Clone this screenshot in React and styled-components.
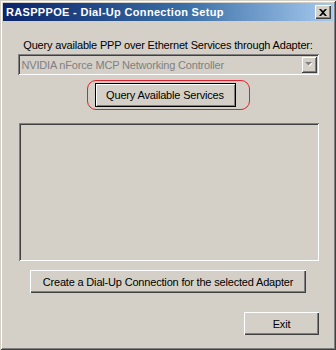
import React from 'react';
import styled, { createGlobalStyle } from 'styled-components';

const GlobalStyle = createGlobalStyle`
  html, body {
    margin: 0;
    padding: 0;
    background: #d4d0c8;
  }
  body {
    font-family: Tahoma, "Liberation Sans", Arial, sans-serif;
    font-size: 11px;
    letter-spacing: -0.18px;
  }
`;

const Window = styled.div`
  box-sizing: border-box;
  width: 336px;
  height: 350px;
  padding: 3px;
  background: #d4d0c8;
  box-shadow: inset 1px 1px 0 #d4d0c8, inset -1px -1px 0 #404040,
    inset 2px 2px 0 #ffffff, inset -2px -2px 0 #808080;
  display: flex;
  flex-direction: column;
`;

const TitleBar = styled.div`
  height: 18px;
  display: flex;
  align-items: center;
  justify-content: space-between;
  padding: 0 2px 0 3px;
  background: linear-gradient(to right, #0a246a 0%, #3a6ea5 55%, #a6caf0 100%);
`;

const Title = styled.span`
  color: #ffffff;
  font-weight: bold;
  font-size: 11px;
  letter-spacing: 0.32px;
`;

const CloseButton = styled.div`
  box-sizing: border-box;
  width: 16px;
  height: 14px;
  background: #d4d0c8;
  box-shadow: inset 1px 1px 0 #ffffff, inset -1px -1px 0 #404040,
    inset -2px -2px 0 #808080;
  display: flex;
  align-items: center;
  justify-content: center;
`;

const Content = styled.div`
  flex: 1;
  display: flex;
  flex-direction: column;
  align-items: center;
  padding: 0 14px;
`;

const Label = styled.div`
  margin-top: 18px;
  color: #000000;
  line-height: 13px;
  text-align: center;
`;

const Combo = styled.div`
  box-sizing: border-box;
  margin-top: 2px;
  width: 301px;
  height: 21px;
  display: flex;
  align-items: center;
  justify-content: space-between;
  padding: 2px 2px 2px 4px;
  background: #d4d0c8;
  box-shadow: inset 1px 1px 0 #808080, inset -1px -1px 0 #ffffff,
    inset 2px 2px 0 #404040, inset -2px -2px 0 #d4d0c8;
`;

const ComboText = styled.span`
  color: #808080;
`;

const ComboArrow = styled.div`
  box-sizing: border-box;
  width: 16px;
  height: 17px;
  background: #d4d0c8;
  box-shadow: inset 1px 1px 0 #d4d0c8, inset -1px -1px 0 #404040,
    inset 2px 2px 0 #ffffff, inset -2px -2px 0 #808080;
  display: flex;
  align-items: center;
  justify-content: center;
`;

const Highlight = styled.div`
  margin-top: 5px;
  padding: 2px 13px 2px 7px;
  border: 1px solid #e0202c;
  border-radius: 9px;
  display: flex;
`;

const Button = styled.div`
  box-sizing: border-box;
  width: ${({ w }) => w}px;
  height: ${({ h }) => h || 23}px;
  display: flex;
  align-items: center;
  justify-content: center;
  color: #000000;
  background: #d4d0c8;
  box-shadow: ${({ isDefault }) =>
    isDefault
      ? 'inset 0 0 0 1px #000000, inset 1px 1px 0 1px #ffffff, inset -1px -1px 0 1px #808080'
      : 'inset 1px 1px 0 #ffffff, inset -1px -1px 0 #404040, inset -2px -2px 0 #808080'};
`;

const ListBox = styled.div`
  box-sizing: border-box;
  margin-top: 13px;
  width: 300px;
  height: 138px;
  margin-left: 1px;
  background: #d4d0c8;
  box-shadow: inset 1px 1px 0 #808080, inset -1px -1px 0 #ffffff,
    inset 2px 2px 0 #404040, inset -2px -2px 0 #d4d0c8;
`;

const ButtonRow = styled.div`
  margin-top: ${({ top }) => top}px;
  align-self: ${({ align }) => align || 'center'};
  display: flex;
`;

export default function App() {
  return (
    <>
      <GlobalStyle />
      <Window>
        <TitleBar>
          <Title>RASPPPOE - Dial-Up Connection Setup</Title>
          <CloseButton>
            <svg width="8" height="7" viewBox="0 0 8 7">
              <path d="M0 0h2l2 2 2-2h2L5 3.5 8 7H6L4 5 2 7H0l3-3.5z" fill="#000" />
            </svg>
          </CloseButton>
        </TitleBar>
        <Content>
          <Label>Query available PPP over Ethernet Services through Adapter:</Label>
          <Combo>
            <ComboText>NVIDIA nForce MCP Networking Controller</ComboText>
            <ComboArrow>
              <svg width="7" height="5" viewBox="0 0 7 5">
                <path d="M1 1h7L4.5 4.5z" fill="#ffffff" />
                <path d="M0 0h7L3.5 3.5z" fill="#808080" />
              </svg>
            </ComboArrow>
          </Combo>
          <Highlight>
            <Button w={141} h={24} isDefault>Query Available Services</Button>
          </Highlight>
          <ListBox />
          <ButtonRow top={9}>
            <Button w={276}>Create a Dial-Up Connection for the selected Adapter</Button>
          </ButtonRow>
          <ButtonRow top={19} align="flex-end">
            <Button w={75}>Exit</Button>
          </ButtonRow>
        </Content>
      </Window>
    </>
  );
}
